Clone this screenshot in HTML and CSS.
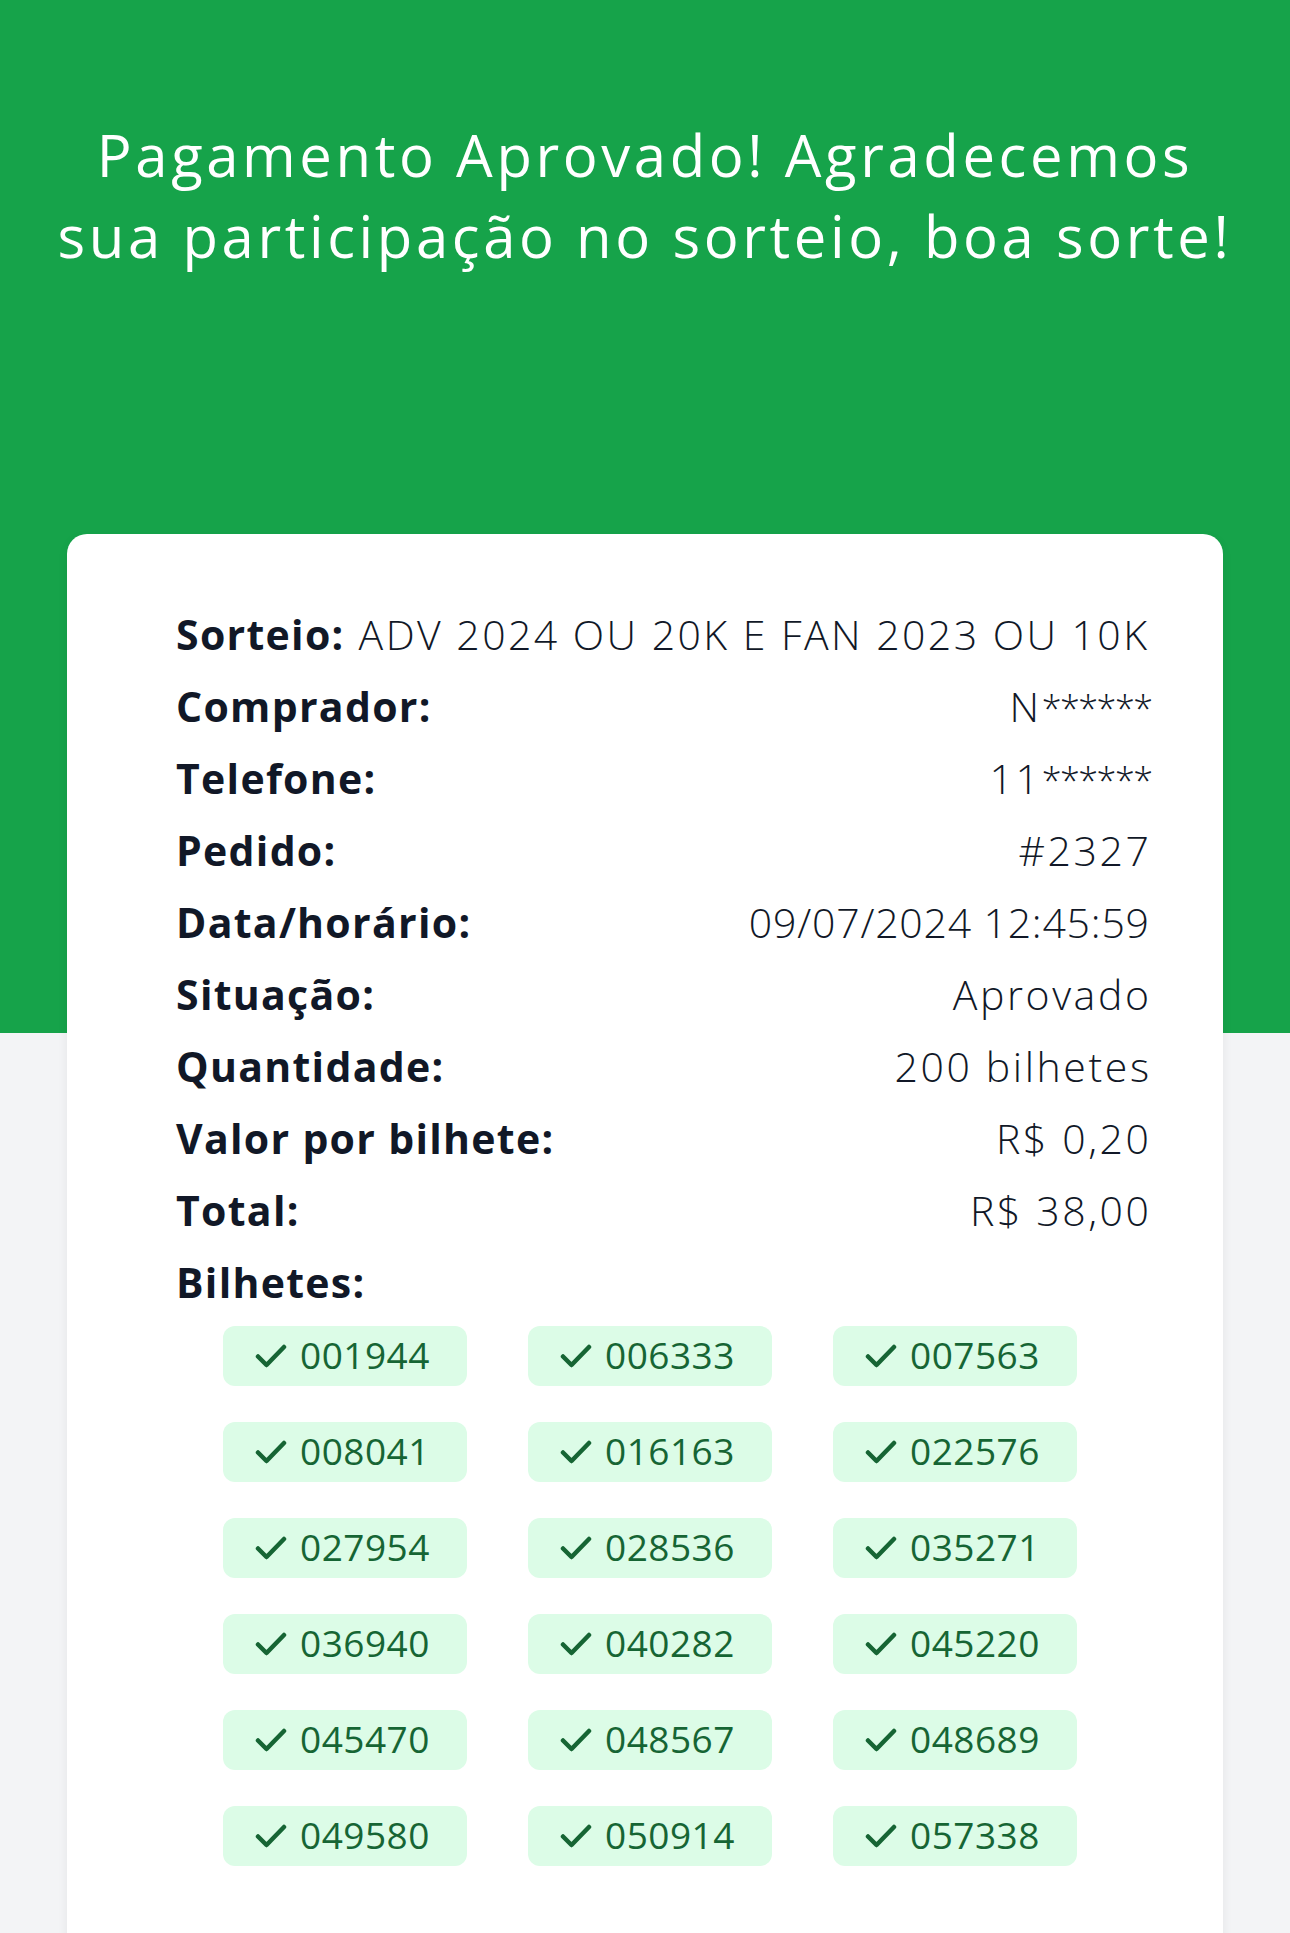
FILE: index.html
```html
<!DOCTYPE html>
<html lang="pt-BR">
<head>
<meta charset="utf-8">
<title>Pagamento Aprovado</title>
<link rel="stylesheet" href="styles.css">
</head>
<body>
<header class="hero">
  <h1 class="hero-title">Pagamento Aprovado! Agradecemos<br>sua participação no sorteio, boa sorte!</h1>
</header>
<main class="page">
  <section class="card">
    <div class="row row-inline"><span class="label">Sorteio:</span><span class="value value-long">ADV 2024 OU 20K E FAN 2023 OU 10K</span></div>
    <div class="row"><span class="label">Comprador:</span><span class="value">N<span class="mask">******</span></span></div>
    <div class="row"><span class="label">Telefone:</span><span class="value">11<span class="mask">******</span></span></div>
    <div class="row"><span class="label">Pedido:</span><span class="value">#2327</span></div>
    <div class="row"><span class="label">Data/horário:</span><span class="value value-num">09/07/2024 12:45:59</span></div>
    <div class="row"><span class="label">Situação:</span><span class="value">Aprovado</span></div>
    <div class="row"><span class="label">Quantidade:</span><span class="value">200 bilhetes</span></div>
    <div class="row"><span class="label">Valor por bilhete:</span><span class="value">R$ 0,20</span></div>
    <div class="row"><span class="label">Total:</span><span class="value">R$ 38,00</span></div>
    <div class="row"><span class="label">Bilhetes:</span></div>
    <div class="tickets">
      <div class="ticket"><svg class="check" viewBox="0 0 32 24"><path d="M3 12.5 L11.5 21 L29 3"/></svg><span>001944</span></div>
      <div class="ticket"><svg class="check" viewBox="0 0 32 24"><path d="M3 12.5 L11.5 21 L29 3"/></svg><span>006333</span></div>
      <div class="ticket"><svg class="check" viewBox="0 0 32 24"><path d="M3 12.5 L11.5 21 L29 3"/></svg><span>007563</span></div>
      <div class="ticket"><svg class="check" viewBox="0 0 32 24"><path d="M3 12.5 L11.5 21 L29 3"/></svg><span>008041</span></div>
      <div class="ticket"><svg class="check" viewBox="0 0 32 24"><path d="M3 12.5 L11.5 21 L29 3"/></svg><span>016163</span></div>
      <div class="ticket"><svg class="check" viewBox="0 0 32 24"><path d="M3 12.5 L11.5 21 L29 3"/></svg><span>022576</span></div>
      <div class="ticket"><svg class="check" viewBox="0 0 32 24"><path d="M3 12.5 L11.5 21 L29 3"/></svg><span>027954</span></div>
      <div class="ticket"><svg class="check" viewBox="0 0 32 24"><path d="M3 12.5 L11.5 21 L29 3"/></svg><span>028536</span></div>
      <div class="ticket"><svg class="check" viewBox="0 0 32 24"><path d="M3 12.5 L11.5 21 L29 3"/></svg><span>035271</span></div>
      <div class="ticket"><svg class="check" viewBox="0 0 32 24"><path d="M3 12.5 L11.5 21 L29 3"/></svg><span>036940</span></div>
      <div class="ticket"><svg class="check" viewBox="0 0 32 24"><path d="M3 12.5 L11.5 21 L29 3"/></svg><span>040282</span></div>
      <div class="ticket"><svg class="check" viewBox="0 0 32 24"><path d="M3 12.5 L11.5 21 L29 3"/></svg><span>045220</span></div>
      <div class="ticket"><svg class="check" viewBox="0 0 32 24"><path d="M3 12.5 L11.5 21 L29 3"/></svg><span>045470</span></div>
      <div class="ticket"><svg class="check" viewBox="0 0 32 24"><path d="M3 12.5 L11.5 21 L29 3"/></svg><span>048567</span></div>
      <div class="ticket"><svg class="check" viewBox="0 0 32 24"><path d="M3 12.5 L11.5 21 L29 3"/></svg><span>048689</span></div>
      <div class="ticket"><svg class="check" viewBox="0 0 32 24"><path d="M3 12.5 L11.5 21 L29 3"/></svg><span>049580</span></div>
      <div class="ticket"><svg class="check" viewBox="0 0 32 24"><path d="M3 12.5 L11.5 21 L29 3"/></svg><span>050914</span></div>
      <div class="ticket"><svg class="check" viewBox="0 0 32 24"><path d="M3 12.5 L11.5 21 L29 3"/></svg><span>057338</span></div>
    </div>
  </section>
</main>
</body>
</html>
```

FILE: styles.css
```css
* { box-sizing: border-box; }

html, body {
  margin: 0;
  padding: 0;
  background: #f3f4f6;
  font-family: "Open Sans", "Noto Sans", sans-serif;
  color: #111827;
}

.hero {
  background: #16a34a;
  height: 1033px;
  padding-top: 114px;
}

.hero-title {
  margin: 0;
  color: #ffffff;
  font-weight: 400;
  font-size: 58px;
  line-height: 81px;
  letter-spacing: 3.6px;
  text-align: center;
}

.page {
  padding: 0 67px 200px;
}

.card {
  margin-top: -499px;
  background: #ffffff;
  border-radius: 20px;
  box-shadow: 0 4px 12px rgba(0, 0, 0, 0.06);
  padding: 64px 74px 120px 109px;
}

.row {
  display: flex;
  justify-content: space-between;
  align-items: baseline;
  height: 72px;
  font-size: 41px;
  line-height: 72px;
}

.row-inline {
  justify-content: flex-start;
  gap: 14px;
}

.label {
  font-weight: 700;
  letter-spacing: 1.3px;
  white-space: nowrap;
}

.value {
  font-weight: 300;
  letter-spacing: 2.6px;
  white-space: nowrap;
  margin-right: -2.6px;
}

.value-long {
  letter-spacing: 2.45px;
}

.value-num {
  letter-spacing: 0.8px;
  margin-right: -0.8px;
}

.mask {
  font-size: 36px;
  line-height: 0;
  letter-spacing: -1.5px;
}

.tickets {
  display: grid;
  grid-template-columns: repeat(3, 244px);
  column-gap: 61px;
  row-gap: 36px;
  margin-top: 8px;
  margin-left: 47px;
}

.ticket {
  height: 60px;
  background: #dcfce7;
  border-radius: 12px;
  display: flex;
  align-items: center;
  padding-left: 32px;
  padding-bottom: 3px;
  gap: 13px;
  color: #166534;
  font-size: 37px;
  font-weight: 500;
  letter-spacing: 0.5px;
}

.check {
  width: 32px;
  height: 24px;
  margin-top: 2px;
  fill: none;
  stroke: #166534;
  stroke-width: 4.5;
  stroke-linecap: round;
  stroke-linejoin: round;
}
```
